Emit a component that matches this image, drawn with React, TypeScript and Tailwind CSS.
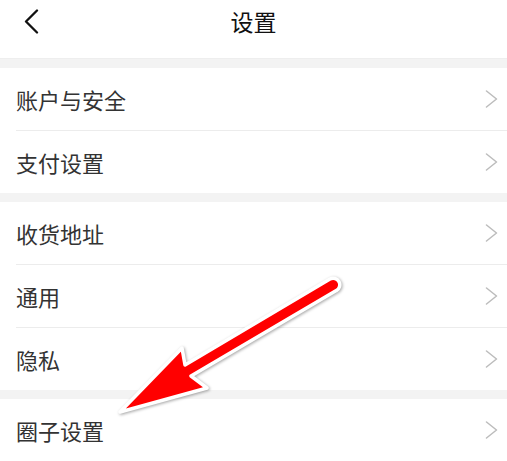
const groups = [
  ["账户与安全", "支付设置"],
  ["收货地址", "通用", "隐私"],
  ["圈子设置"],
];

function Arrow() {
  return (
    <svg width="13" height="18" viewBox="0 0 13 18" className="text-[#bcbcbc]">
      <path d="M1.5 1 L11.5 9 L1.5 17" fill="none" stroke="currentColor" strokeWidth="1.5" strokeLinecap="round" strokeLinejoin="round" />
    </svg>
  );
}

function Row({ label, last }: { label: string; last: boolean }) {
  return (
    <div className="bg-white">
      <div className="flex h-[62px] items-center justify-between pl-4 pr-[9px]">
        <span className="text-[22px] text-[#333]">{label}</span>
        <Arrow />
      </div>
      {!last && <div className="ml-4 h-px bg-[#ececec]" />}
    </div>
  );
}

export default function App() {
  return (
    <div
      className="relative h-[461px] w-[507px] overflow-hidden bg-white"
      style={{ fontFamily: '"Noto Sans CJK SC", "Noto Sans", sans-serif' }}
    >
      <header className="h-[59px] border-b border-[#eeeeee] bg-white">
        <div className="relative flex h-[43px] items-center justify-center">
          <svg className="absolute left-[24px] top-[9px]" width="15" height="25" viewBox="0 0 15 25">
            <path d="M13 1.5 L2 12.5 L13 23.5" fill="none" stroke="#111" strokeWidth="2.3" strokeLinecap="round" strokeLinejoin="round" />
          </svg>
          <h1 className="text-[23px] font-normal text-[#111]">设置</h1>
        </div>
      </header>

      {groups.map((items, gi) => (
        <div key={gi}>
          <div className="h-[9px] bg-[#f3f3f3]" />
          {items.map((label, i) => (
            <Row key={label} label={label} last={i === items.length - 1} />
          ))}
        </div>
      ))}

      {/* red annotation arrow over the list */}
      <svg className="pointer-events-none absolute left-0 top-0" width="507" height="461" viewBox="0 0 507 461">
        <path
          d="M120 412 L182 348 L185 365 L330 279 A6.5 6.5 0 0 1 336.3 290.6 L191 376 L207 388 Z"
          fill="#ff0000"
          stroke="#ffffff"
          strokeWidth="3.5"
          strokeLinejoin="round"
          style={{ filter: "drop-shadow(1px 1.5px 1.5px rgba(0,0,0,0.35))" }}
        />
      </svg>
    </div>
  );
}
